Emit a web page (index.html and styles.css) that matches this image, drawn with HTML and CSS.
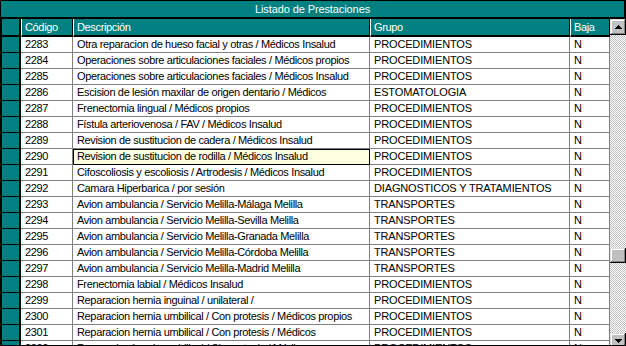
FILE: index.html
```html
<!DOCTYPE html>
<html lang="es">
<head>
<meta charset="utf-8">
<title>Listado de Prestaciones</title>
<link rel="stylesheet" href="styles.css">
</head>
<body>
<div class="grid">
  <div class="title">Listado de Prestaciones</div>
  <div class="body">
    <div class="table-wrap">
      <table class="list">
        <colgroup>
          <col class="c-ind"><col class="c-cod"><col class="c-desc"><col class="c-grp"><col class="c-baja">
        </colgroup>
        <thead>
          <tr><th class="ind"></th><th>Código</th><th>Descripción</th><th>Grupo</th><th>Baja</th></tr>
        </thead>
        <tbody>
          <tr><td class="ind"></td><td>2283</td><td>Otra reparacion de hueso facial y otras / Médicos Insalud</td><td>PROCEDIMIENTOS</td><td>N</td></tr>
          <tr><td class="ind"></td><td>2284</td><td>Operaciones sobre articulaciones faciales / Médicos propios</td><td>PROCEDIMIENTOS</td><td>N</td></tr>
          <tr><td class="ind"></td><td>2285</td><td>Operaciones sobre articulaciones faciales / Médicos Insalud</td><td>PROCEDIMIENTOS</td><td>N</td></tr>
          <tr><td class="ind"></td><td>2286</td><td>Escision de lesión maxilar de origen dentario / Médicos</td><td>ESTOMATOLOGIA</td><td>N</td></tr>
          <tr><td class="ind"></td><td>2287</td><td>Frenectomia lingual / Médicos propios</td><td>PROCEDIMIENTOS</td><td>N</td></tr>
          <tr><td class="ind"></td><td>2288</td><td>Fístula arteriovenosa / FAV / Médicos Insalud</td><td>PROCEDIMIENTOS</td><td>N</td></tr>
          <tr><td class="ind"></td><td>2289</td><td>Revision de sustitucion de cadera / Médicos Insalud</td><td>PROCEDIMIENTOS</td><td>N</td></tr>
          <tr><td class="ind"></td><td>2290</td><td class="focus">Revision de sustitucion de rodilla / Médicos Insalud</td><td>PROCEDIMIENTOS</td><td>N</td></tr>
          <tr><td class="ind"></td><td>2291</td><td>Cifoscoliosis y escoliosis / Artrodesis / Médicos Insalud</td><td>PROCEDIMIENTOS</td><td>N</td></tr>
          <tr><td class="ind"></td><td>2292</td><td>Camara Hiperbarica / por sesión</td><td>DIAGNOSTICOS Y TRATAMIENTOS</td><td>N</td></tr>
          <tr><td class="ind"></td><td>2293</td><td>Avion ambulancia / Servicio Melilla-Málaga Melilla</td><td>TRANSPORTES</td><td>N</td></tr>
          <tr><td class="ind"></td><td>2294</td><td>Avion ambulancia / Servicio Melilla-Sevilla Melilla</td><td>TRANSPORTES</td><td>N</td></tr>
          <tr><td class="ind"></td><td>2295</td><td>Avion ambulancia / Servicio Melilla-Granada Melilla</td><td>TRANSPORTES</td><td>N</td></tr>
          <tr><td class="ind"></td><td>2296</td><td>Avion ambulancia / Servicio Melilla-Córdoba Melilla</td><td>TRANSPORTES</td><td>N</td></tr>
          <tr><td class="ind"></td><td>2297</td><td>Avion ambulancia / Servicio Melilla-Madrid Melilla</td><td>TRANSPORTES</td><td>N</td></tr>
          <tr><td class="ind"></td><td>2298</td><td>Frenectomia labial / Médicos Insalud</td><td>PROCEDIMIENTOS</td><td>N</td></tr>
          <tr><td class="ind"></td><td>2299</td><td>Reparacion hernia inguinal / unilateral /</td><td>PROCEDIMIENTOS</td><td>N</td></tr>
          <tr><td class="ind"></td><td>2300</td><td>Reparacion hernia umbilical / Con protesis / Médicos propios</td><td>PROCEDIMIENTOS</td><td>N</td></tr>
          <tr><td class="ind"></td><td>2301</td><td>Reparacion hernia umbilical / Con protesis / Médicos</td><td>PROCEDIMIENTOS</td><td>N</td></tr>
          <tr><td class="ind"></td><td>2302</td><td>Reparacion hernia umbilical / Sin protesis / Médicos</td><td>PROCEDIMIENTOS</td><td>N</td></tr>
        </tbody>
      </table>
    </div>
    <div class="scrollbar">
      <div class="sb-btn"><svg width="7" height="4" viewBox="0 0 7 4" shape-rendering="crispEdges"><path d="M3 0h1v1h1v1h1v1h1v1H0V3h1V2h1V1h1z" fill="#000"/></svg></div>
      <div class="sb-track"><div class="sb-thumb"></div></div>
      <div class="sb-btn"><svg width="7" height="4" viewBox="0 0 7 4" shape-rendering="crispEdges"><path d="M0 0h7v1H6v1H5v1H4v1H3V3H2V2H1V1H0z" fill="#000"/></svg></div>
    </div>
  </div>
</div>
</body>
</html>
```

FILE: styles.css
```css
html, body {
  margin: 0;
  padding: 0;
  background: #fff;
}

body {
  font-family: "Liberation Sans", Arial, sans-serif;
  font-size: 11px;
  color: #000;
}

.grid {
  width: 626px;
  height: 346px;
  box-sizing: border-box;
  border-top: 1px solid #000;
  border-left: 1px solid #000;
  border-bottom: 1px solid #000;
  overflow: hidden;
  display: flex;
  flex-direction: column;
  background: #fff;
}

.title {
  height: 16px;
  line-height: 16px;
  flex: none;
  background: #008080;
  color: #fff;
  text-align: center;
  border-bottom: 2px solid #000;
  border-right: 2px solid #000;
  letter-spacing: -0.1px;
}

.body {
  flex: 1;
  display: flex;
  overflow: hidden;
}

.table-wrap {
  width: 609px;
  flex: none;
  overflow: hidden;
}

.list {
  border-collapse: separate;
  border-spacing: 0;
  table-layout: fixed;
  width: 609px;
  letter-spacing: -0.35px;
}

.c-ind { width: 20px; }
.c-cod { width: 52px; }
.c-desc { width: 297px; }
.c-grp { width: 200px; }
.c-baja { width: 40px; }

.list th,
.list td {
  padding: 0 0 0 4px;
  line-height: 15px;
  white-space: nowrap;
  overflow: hidden;
  text-align: left;
  font-weight: normal;
  border-right: 1px solid #808080;
  border-bottom: 1px solid #808080;
}

.list td:nth-child(4) {
  letter-spacing: -0.15px;
}

.list th {
  background: #008080;
  color: #fff;
  line-height: 16px;
  padding-left: 3px;
  border-left: 1px solid #fff;
  border-right: 1px solid #000;
  border-bottom: 2px solid #000;
}

.list .ind {
  padding: 0;
  background: #008080;
  border-left: 1px solid #000;
  border-right: 2px solid #000;
  border-bottom: 1px solid #000;
}

.list th.ind {
  border-bottom: 2px solid #000;
}

.list td.focus {
  background: #ffffe1;
  outline: 1px solid #000;
  outline-offset: -1px;
}

.scrollbar {
  width: 16px;
  flex: none;
  display: flex;
  flex-direction: column;
}

.sb-btn {
  width: 16px;
  height: 16px;
  flex: none;
  box-sizing: border-box;
  background: #c0c0c0;
  box-shadow: inset -1px -1px #000, inset 1px 1px #dfdfdf, inset -2px -2px #808080, inset 2px 2px #fff;
  display: flex;
  align-items: center;
  justify-content: center;
}

.sb-btn svg {
  display: block;
}

.sb-track {
  height: 298px;
  flex: none;
  background-color: #fff;
  background-image: repeating-conic-gradient(#c0c0c0 0 25%, #fff 0 50%);
  background-size: 2px 2px;
}

.sb-thumb {
  margin-top: 213px;
  width: 16px;
  height: 15px;
  background: #c0c0c0;
  box-shadow: inset -1px -1px #000, inset 1px 1px #dfdfdf, inset -2px -2px #808080, inset 2px 2px #fff;
}
```
